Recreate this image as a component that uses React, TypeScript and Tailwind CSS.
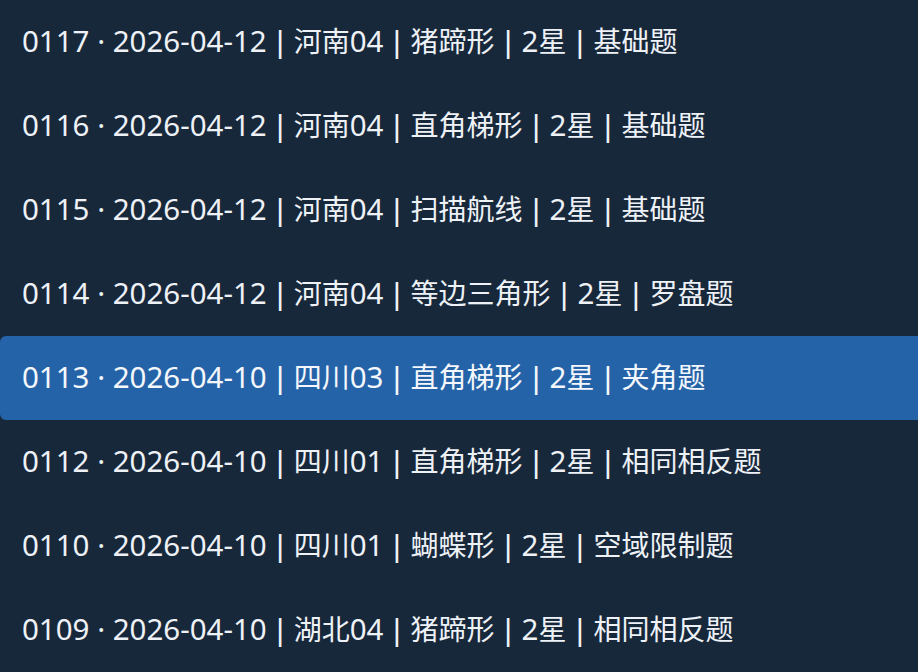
const rows = [
  '0117 · 2026-04-12 | 河南04 | 猪蹄形 | 2星 | 基础题',
  '0116 · 2026-04-12 | 河南04 | 直角梯形 | 2星 | 基础题',
  '0115 · 2026-04-12 | 河南04 | 扫描航线 | 2星 | 基础题',
  '0114 · 2026-04-12 | 河南04 | 等边三角形 | 2星 | 罗盘题',
  '0113 · 2026-04-10 | 四川03 | 直角梯形 | 2星 | 夹角题',
  '0112 · 2026-04-10 | 四川01 | 直角梯形 | 2星 | 相同相反题',
  '0110 · 2026-04-10 | 四川01 | 蝴蝶形 | 2星 | 空域限制题',
  '0109 · 2026-04-10 | 湖北04 | 猪蹄形 | 2星 | 相同相反题',
]

const CJK = /([\u4e00-\u9fff]+)/

function Run({ text }: { text: string }) {
  return (
    <>
      {text.split(CJK).map((p, i) =>
        CJK.test(p) ? (
          <span key={i} className="text-[28px]">
            {p}
          </span>
        ) : (
          <span key={i}>{p}</span>
        )
      )}
    </>
  )
}

// latin digits in the shot are wider than the CJK run, so size them apart
function Line({ text }: { text: string }) {
  const fields = text.split(' | ')
  return (
    <span className="text-[29.5px] leading-none">
      {fields.map((f, i) => (
        <span key={i}>
          {i > 0 && <span className="inline-block w-[27px] text-center font-medium">|</span>}
          <Run text={f} />
        </span>
      ))}
    </span>
  )
}

export default function App() {
  const active = 4
  return (
    <div
      className="w-[918px] h-[672px] bg-[#18283b] overflow-hidden flex flex-col"
      style={{ fontFamily: '"Noto Sans", "Noto Sans CJK SC", sans-serif' }}
    >
      {rows.map((r, i) => (
        <div
          key={i}
          className={
            i === active
              ? 'h-[84px] flex items-center pl-[22px] pb-[3px] bg-[#2563a8] rounded-l-md text-[#f4f7fb] whitespace-nowrap'
              : 'h-[84px] flex items-center pl-[22px] pb-[3px] text-[#eef2f7] whitespace-nowrap'
          }
        >
          <Line text={r} />
        </div>
      ))}
    </div>
  )
}
